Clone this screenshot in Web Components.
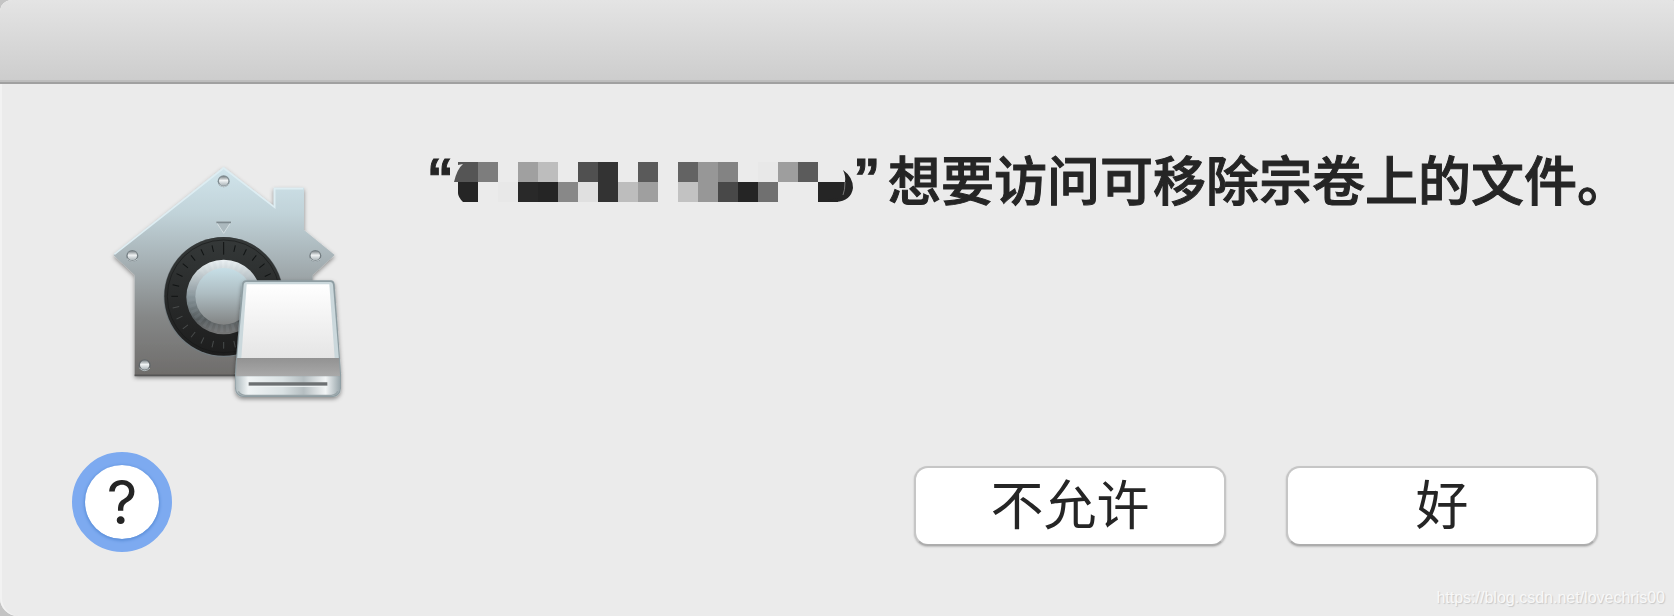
<!DOCTYPE html>
<html lang="zh-CN">
<head>
<meta charset="utf-8">
<title>访问可移除宗卷</title>
<style>
html,body{margin:0;background:#c4c4c4;font-family:"Noto Sans CJK SC",sans-serif;color:#252525}
</style>
</head>
<body>
<permission-dialog>
  <vault-icon slot="icon"></vault-icon>
  <dialog-message slot="message">想要访问可移除宗卷上的文件。</dialog-message>
  <help-button slot="help"></help-button>
  <push-button slot="actions">不允许</push-button>
  <push-button slot="actions">好</push-button>
  <source-mark slot="mark">https://blog.csdn.net/lovechris00</source-mark>
</permission-dialog>
<script>
const define=(name,html)=>customElements.define(name,class extends HTMLElement{
  constructor(){super();this.attachShadow({mode:'open'}).innerHTML=html;}
});

define('permission-dialog',`<style>
:host{display:block}
section{position:relative;box-sizing:border-box;min-height:100vh;background:#ebebeb;border-radius:12px 2px 2px 18px;overflow:hidden;box-shadow:inset 2px 0 #f2f2f2;display:flex;flex-direction:column}
header{height:80px;background:linear-gradient(#e4e4e4,#cdcdcd);border-bottom:2px solid #bdbdbd;box-shadow:0 2px #a0a0a0;flex:none}
main{display:flex;justify-content:space-between;padding:68px 44px 0 100px}
footer{display:flex;justify-content:space-between;align-items:center;padding:42px 76px 60px 72px}
.actions{display:flex;gap:60px;padding-top:8px}
</style>
<section role="dialog" aria-label="访问权限"><header></header>
<main><slot name="icon"></slot><slot name="message"></slot></main>
<footer><slot name="help"></slot><div class="actions"><slot name="actions"></slot></div></footer>
<slot name="mark"></slot></section>`);

const top2=['#555','#7d7d7d','','#a0a0a0','#bdbdbd','','#505050','#333','','#5a5a5a','','#636363','#979797','#838383','','#e8e8e8','#9e9e9e','#5b5b5b',''];
const bot2=['#252525','','#e8e8e8','#292929','#252525','#888','#e0e0e0','#333','#bdbdbd','#9f9f9f','','#c2c2c2','#979797','#484848','#252525','#707070','','','#252525'];
const cells=(row,y)=>row.map((c,i)=>c&&i?`<rect x="${i*20+4}" y="${y}" width="20" height="20" fill="${c}"/>`:'').join('');
define('dialog-message',`<style>
:host{display:block}
h1{display:flex;align-items:flex-start;margin:0;font-size:53px;line-height:56px;font-weight:500;white-space:nowrap;-webkit-text-stroke:1px #252525}
.q{font-family:"Liberation Sans",sans-serif;font-weight:700}
svg{display:block;margin-top:12px;flex:none}
.t{margin-left:8px}
</style>
<h1><span class="q">“</span><svg width="400" height="40" viewBox="0 0 400 40" shape-rendering="crispEdges" aria-hidden="true">
<g shape-rendering="auto"><path d="M4 0h20v20H0Q3 7 9 2L4 3z" fill="#555"/><path d="M4 20h20v20H9Q4 35 4 31z" fill="#252525"/></g>
${cells(top2,0)}${cells(bot2,20)}<path d="M389 8Q399 15 399 26Q397 39 382 40L374 38L384 36V20H391Q392 14 389 8Z" fill="#252525" shape-rendering="auto"/><path d="M391 20Q391 28 389 33" fill="none" stroke="#777" stroke-width="1" shape-rendering="auto"/></svg><span class="q">”</span><span class="t"><slot></slot></span></h1>`);

define('help-button',`<style>
:host{display:block}
button{display:block;width:100px;height:100px;padding:0;border:13px solid #7daaf0;border-radius:50%;background:#fff;font:400 60px/74px Inter,sans-serif;color:#252525;outline:0;position:relative}
button::before{content:"";position:absolute;inset:0;border-radius:50%;box-shadow:0 1px 3px 1px #5c8fd9}
</style><button type="button" aria-label="帮助">?</button>`);

define('push-button',`<style>
:host{display:block}
button{display:block;box-sizing:border-box;width:312px;height:80px;padding:0 0 8px;border:2px solid #c6c6c6;border-bottom-color:#adadad;border-radius:14px;background:#fff;box-shadow:0 1px 2px #0003;font:400 53px/68px "Noto Sans CJK SC",sans-serif;color:#252525}
</style><button type="button"><slot></slot></button>`);

define('source-mark',`<style>
:host{position:absolute;right:9px;bottom:8px;font:16px/20px "Liberation Sans",sans-serif;color:#f8f8f8;text-shadow:1px 1px 1px #c8c8c8}
</style><slot></slot>`);

let ticks='';
for(let i=0;i<28;i++){const a=i*360/28;ticks+=`<path d="M371 ${i?282:276}V${i?302:314}" transform="rotate(${a} 371 439)" stroke="${a>90&&a<270?'#484b4b':'#111414'}" stroke-width="3"/>`;}
const screw=(x,y)=>`<circle cx="${x}" cy="${y+1}" r="18" fill="#586166" opacity=".65"/><circle cx="${x}" cy="${y}" r="14" fill="url(#screw)"/><path d="M${x-16} ${y+9}Q${x} ${y+25} ${x+16} ${y+9}" fill="none" stroke="#e3ecef" stroke-width="3" opacity=".65"/>`;
define('vault-icon',`<style>:host{display:block;flex:none}svg{display:block}</style>
<svg width="260" height="260" viewBox="0 0 780 780" role="img" aria-label="安全性与可移除宗卷">
<defs>
<linearGradient id="house" x2="0" y2="1"><stop stop-color="#d1e5ec"/><stop offset=".22" stop-color="#c1d3d9"/><stop offset=".45" stop-color="#a6b1b5"/><stop offset=".72" stop-color="#858787"/><stop offset="1" stop-color="#6e6c6a"/></linearGradient>
<linearGradient id="dial" x2="0" y2="1"><stop stop-color="#353939"/><stop offset="1" stop-color="#1d1d1d"/></linearGradient>
<linearGradient id="rim" x2="0" y2="1"><stop stop-color="#edf3f5"/><stop offset=".5" stop-color="#869398"/><stop offset=".8" stop-color="#555b5d"/><stop offset="1" stop-color="#777"/></linearGradient>
<linearGradient id="knob" x2="0" y2="1"><stop stop-color="#c7dfe7"/><stop offset=".45" stop-color="#aebdc2"/><stop offset="1" stop-color="#828484"/></linearGradient>
<linearGradient id="screw" x2="0" y2="1"><stop stop-color="#7c8488"/><stop offset=".45" stop-color="#f0f3f4"/><stop offset="1" stop-color="#a9b2b6"/></linearGradient>
<linearGradient id="disk" x2="0" y2="1"><stop stop-color="#fff"/><stop offset="1" stop-color="#e5e5e5"/></linearGradient>
<linearGradient id="band" x2="0" y2="1"><stop stop-color="#929292"/><stop offset="1" stop-color="#a9a9a9"/></linearGradient>
<linearGradient id="front"><stop stop-color="#aebabe"/><stop offset=".12" stop-color="#f0f4f5"/><stop offset=".45" stop-color="#d9e1e3"/><stop offset=".65" stop-color="#b5bec1"/><stop offset=".86" stop-color="#f2f5f6"/><stop offset="1" stop-color="#98a5aa"/></linearGradient>
<filter id="shadow" x="-20%" y="-20%" width="140%" height="140%"><feDropShadow dx="0" dy="6" stdDeviation="7" flood-opacity=".42"/></filter>
</defs>
<g filter="url(#shadow)"><path d="M371 51L521 168V113H612V240L704 315L638 375V678H104V375L40 315Z" fill="url(#house)"/></g>
<path d="M43 313L371 54L524 172V116H610" fill="none" stroke="#deedf2" stroke-width="5"/><path d="M104 676H410" stroke="#555" stroke-width="5"/>
<path d="M349 216H393L371 250Z" fill="#acb9be" stroke="#d5dfe2" stroke-width="3"/><path d="M349 217H393" stroke="#7e8a8f" stroke-width="5"/>
<circle cx="371" cy="441" r="180" fill="#737c80"/><circle cx="371" cy="439" r="178" fill="url(#dial)"/><circle cx="371" cy="439" r="169" fill="none" stroke="#151717" stroke-width="3" opacity=".6"/>${ticks}
<circle cx="371" cy="441" r="112" fill="url(#rim)"/><circle cx="371" cy="439" r="97" fill="none" stroke="#aebbc0" stroke-width="22" stroke-dasharray="9 8" opacity=".1"/><circle cx="371" cy="439" r="85" fill="url(#knob)"/>
${screw(371,93)}${screw(97,317)}${screw(646,317)}${screw(134,645)}
<g filter="url(#shadow)"><path d="M438 391H693Q702 391 704 402L723 670V714Q721 739 699 741H429Q406 739 405 714V670L426 402Q428 391 438 391Z" fill="#8e9da2"/></g>
<path d="M439 396H690Q698 396 699 405L717 630H411L431 405Q432 396 439 396Z" fill="#cbd8dc"/><path d="M440 403H688L704 624H424Z" fill="url(#disk)"/>
<path d="M411 624H717L720 679H408Z" fill="url(#band)"/><path d="M407 679H721V711Q719 735 699 737H429Q409 735 407 711Z" fill="url(#front)"/><path d="M415 724Q421 735 435 736H694Q709 735 713 724" fill="none" stroke="#97a3a7" stroke-width="4"/><path d="M446 697H682V707H446Z" fill="#6c7072"/><path d="M446 709H682" stroke="#f0f4f5" stroke-width="3"/>
</svg>`);
</script>
</body>
</html>
